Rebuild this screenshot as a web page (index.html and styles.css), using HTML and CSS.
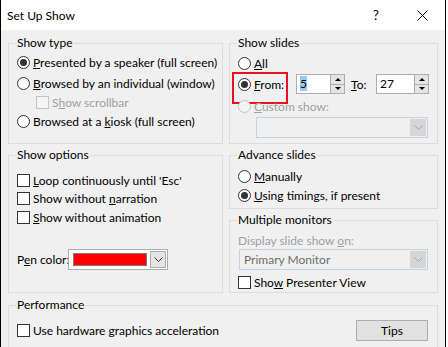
FILE: index.html
```html
<!DOCTYPE HTML>
<html>
  <head>
    <link rel="stylesheet" href="styles.css">
  </head>
  <body>
    <div class="window">
      <div class="titlebar">
        <span class="title">Set Up Show</span>
        <span class="caption_btn">?</span>
        <span class="caption_btn">
          <svg width="11" height="11" viewBox="0 0 11 11"><path d="M0.5 0.5 L10.5 10.5 M10.5 0.5 L0.5 10.5" stroke="#000" stroke-width="1" fill="none"/></svg>
        </span>
      </div>

      <div class="content">
        <div class="column">
          <fieldset class="group type_group">
            <legend>Show type</legend>
            <div class="row r1"><span class="radio on"></span><span class="label"><u>P</u>resented by a speaker (full screen)</span></div>
            <div class="row r2"><span class="radio"></span><span class="label"><u>B</u>rowsed by an individual (window)</span></div>
            <div class="row r3 indent disabled"><span class="check off"></span><span class="label">S<u>h</u>ow scrollbar</span></div>
            <div class="row r4"><span class="radio"></span><span class="label">Browsed at a <u>k</u>iosk (full screen)</span></div>
          </fieldset>

          <fieldset class="group options_group">
            <legend>Show options</legend>
            <div class="row short o1"><span class="check"></span><span class="label"><u>L</u>oop continuously until 'Esc'</span></div>
            <div class="row short o2"><span class="check"></span><span class="label">Show without <u>n</u>arration</span></div>
            <div class="row short o3"><span class="check"></span><span class="label"><u>S</u>how without animation</span></div>
            <div class="row pen_row">
              <span class="pen_label">P<u>e</u>n color:</span>
              <div class="combo pen_combo">
                <span class="swatch"></span>
                <span class="combo_btn">
                  <svg width="9" height="5" viewBox="0 0 9 5"><path d="M0.5 0.5 L4.5 4.5 L8.5 0.5" stroke="#333" fill="none"/></svg>
                </span>
              </div>
            </div>
          </fieldset>
        </div>

        <div class="column">
          <fieldset class="group slides_group">
            <legend>Show slides</legend>
            <div class="row s1"><span class="radio"></span><span class="label"><u>A</u>ll</span></div>
            <div class="row s2 from_row">
              <span class="highlight"></span>
              <span class="radio on"></span><span class="label from_label"><u>F</u>rom:</span>
              <div class="spin from_spin">
                <span class="spin_val"><span class="selected">5</span></span>
                <span class="spin_btns">
                  <span class="spin_up"></span>
                  <span class="spin_down"></span>
                </span>
              </div>
              <span class="to_label"><u>T</u>o:</span>
              <div class="spin to_spin">
                <span class="spin_val">27</span>
                <span class="spin_btns">
                  <span class="spin_up"></span>
                  <span class="spin_down"></span>
                </span>
              </div>
            </div>
            <div class="row s3 disabled"><span class="radio off"></span><span class="label"><u>C</u>ustom show:</span></div>
            <div class="combo off custom_combo">
              <span class="combo_text"></span>
              <span class="combo_btn">
                <svg width="9" height="5" viewBox="0 0 9 5"><path d="M0.5 0.5 L4.5 4.5 L8.5 0.5" stroke="#a8a8a8" fill="none"/></svg>
              </span>
            </div>
          </fieldset>

          <fieldset class="group advance_group">
            <legend>Advance slides</legend>
            <div class="row short a1"><span class="radio"></span><span class="label"><u>M</u>anually</span></div>
            <div class="row short a2"><span class="radio on"></span><span class="label"><u>U</u>sing timings, if present</span></div>
          </fieldset>

          <fieldset class="group monitors_group">
            <legend>Multiple monitors</legend>
            <div class="row short m1 disabled"><span class="label flat">Display slide show <u>o</u>n:</span></div>
            <div class="combo off monitor_combo">
              <span class="combo_text">Primary Monitor</span>
              <span class="combo_btn">
                <svg width="9" height="5" viewBox="0 0 9 5"><path d="M0.5 0.5 L4.5 4.5 L8.5 0.5" stroke="#a8a8a8" fill="none"/></svg>
              </span>
            </div>
            <div class="row short m2"><span class="check"></span><span class="label">Sho<u>w</u> Presenter View</span></div>
          </fieldset>
        </div>

        <fieldset class="group perf_group">
          <legend>Performance</legend>
          <div class="row perf_row">
            <div class="row_left"><span class="check"></span><span class="label">Use hardware <u>g</u>raphics acceleration</span></div>
            <span class="button">Tips</span>
          </div>
        </fieldset>
      </div>
    </div>
  </body>
</html>
```

FILE: styles.css
```css
* {
  box-sizing: border-box;
}

body {
  margin: 0;
  background-color: #fff;
  font-family: Lato, "Liberation Sans", sans-serif;
  font-size: 12px;
  color: #000;
}

.window {
  width: 446px;
  height: 347px;
  border-left: 1px solid #000;
  border-right: 1px solid #000;
  background-color: #f0f0f0;
  overflow: hidden;
}

.titlebar {
  height: 30px;
  background-color: #fff;
  display: flex;
  align-items: center;
  padding-left: 6px;
}

.title {
  flex: 1;
  font-size: 12px;
}

.caption_btn {
  width: 46px;
  height: 30px;
  display: flex;
  align-items: center;
  justify-content: center;
  font-size: 13px;
}

.content {
  display: grid;
  grid-template-columns: 215px 209px;
  column-gap: 6px;
  row-gap: 4px;
  padding: 5px 0 0 7px;
}

.column {
  display: flex;
  flex-direction: column;
  gap: 3px;
}

.group {
  margin: 0;
  padding: 0 8px;
  border: 1px solid #dcdcdc;
  min-width: 0;
  display: flex;
  flex-direction: column;
}

.group legend {
  padding: 0 1px;
  margin-left: -1px;
  line-height: 16px;
}

.type_group { height: 109px; }
.options_group { height: 146px; }
.slides_group { height: 109px; }
.advance_group { height: 62px; }
.monitors_group { height: 81px; }
.perf_group {
  grid-column: 1 / 3;
  height: 60px;
}

.row {
  display: flex;
  align-items: center;
  height: 20px;
  white-space: nowrap;
  position: relative;
}

.row.short { height: 18px; }

.label { margin-left: 3px; }
.label.flat { margin-left: 0; }

.disabled { color: #a0a0a0; }

.radio {
  width: 13px;
  height: 13px;
  border: 1px solid #333;
  border-radius: 50%;
  background-color: #fff;
  flex-shrink: 0;
  display: flex;
  align-items: center;
  justify-content: center;
}

.radio.on:after {
  content: "";
  width: 7px;
  height: 7px;
  border-radius: 50%;
  background-color: #333;
}

.radio.off {
  border-color: #c4c4c4;
  background-color: #f4f4f4;
}

.check {
  width: 13px;
  height: 13px;
  border: 1px solid #333;
  background-color: #fff;
  flex-shrink: 0;
}

.check.off {
  border-color: #c4c4c4;
  background-color: #f4f4f4;
}

/* show type rows */
.r1 { margin-top: 1px; }
.r2 { margin-top: 1px; }
.r3 { height: 18px; }
.indent { padding-left: 19px; }

/* show options rows */
.o1 { margin-top: 8px; }
.o3 { margin-top: 1px; }

.pen_row {
  margin-top: 23px;
  height: 21px;
}

.pen_label { width: 51px; }

.combo {
  display: flex;
  align-items: center;
  height: 21px;
  border: 1px solid #adadad;
  background-color: #fff;
  padding: 1px;
}

.pen_combo { width: 100px; }

.swatch {
  width: 76px;
  height: 13px;
  margin: 0 3px 0 3px;
  background-color: #f00;
  border: 1px solid #7a7a7a;
}

.combo_btn {
  width: 16px;
  height: 17px;
  margin-left: auto;
  background-color: #e5e5e5;
  border: 1px solid #adadad;
  display: flex;
  align-items: center;
  justify-content: center;
}

.combo.off {
  border-color: #c3d3e5;
  background-color: #f0f0f0;
}

.combo.off .combo_btn {
  background-color: #d6d6d6;
  border-color: #d6d6d6;
}

.combo_text {
  padding-left: 3px;
  color: #6d6d6d;
}

/* show slides rows */
.s1 { margin-top: 2px; }
.s2 { margin-top: 1px; }
.s3 { margin-top: 2px; }

.custom_combo {
  width: 172px;
  margin: 1px 0 0 18px;
}

.from_label { width: 42px; }

.highlight {
  position: absolute;
  left: -6px;
  top: -2px;
  width: 56px;
  height: 32px;
  border: 2px solid #e81123;
}

.spin {
  display: flex;
  height: 20px;
  border: 1px solid #adadad;
  background-color: #fff;
}

.from_spin { width: 49px; }
.to_spin { width: 53px; }

.spin_val {
  flex: 1;
  padding-left: 3px;
  line-height: 18px;
}

.selected {
  background-color: #99c9ef;
  color: #000;
}

.spin_btns {
  width: 14px;
  display: flex;
  flex-direction: column;
  background-color: #e5e5e5;
  border-left: 1px solid #adadad;
}

.spin_up, .spin_down {
  flex: 1;
  display: flex;
  align-items: center;
  justify-content: center;
}

.spin_up { border-bottom: 1px solid #adadad; }

.spin_up:after {
  content: "";
  border-left: 3px solid transparent;
  border-right: 3px solid transparent;
  border-bottom: 3px solid #000;
}

.spin_down:after {
  content: "";
  border-left: 3px solid transparent;
  border-right: 3px solid transparent;
  border-top: 3px solid #000;
}

.to_label {
  margin: 0 0 0 6px;
  width: 25px;
}

/* advance slides rows */
.a1 { margin-top: 4px; }
.a2 { margin-top: 1px; }

/* monitors rows */
.m1 { margin-top: 3px; }

.monitor_combo {
  width: 189px;
  margin-left: 1px;
}

.m2 { margin-top: 3px; }

/* performance */
.perf_row {
  margin-top: 7px;
  height: 21px;
  justify-content: space-between;
}

.row_left {
  display: flex;
  align-items: center;
}

.button {
  width: 72px;
  height: 21px;
  margin-right: 1px;
  background-color: #e1e1e1;
  border: 1px solid #adadad;
  display: flex;
  align-items: center;
  justify-content: center;
}
```
